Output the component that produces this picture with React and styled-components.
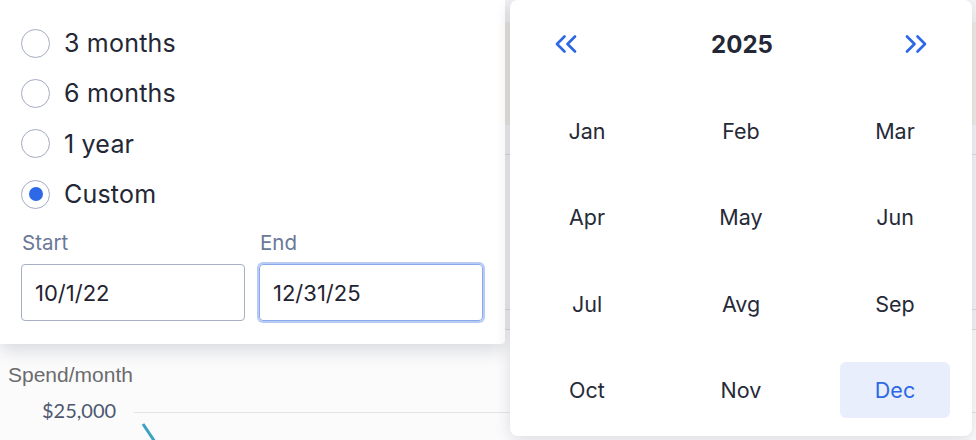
import React from "react";
import styled, { createGlobalStyle } from "styled-components";
import { ChevronsLeft, ChevronsRight } from "lucide-react";

const GlobalStyle = createGlobalStyle`
  html, body {
    margin: 0;
    padding: 0;
    background: #ffffff;
  }
  * {
    box-sizing: border-box;
  }
`;

const Stage = styled.div`
  position: relative;
  width: 976px;
  height: 440px;
  overflow: hidden;
  background: #f4f4f6;
  font-family: "Inter", "Noto Sans", sans-serif;
`;

/* page content sitting behind the popovers */
const Backdrop = styled.div`
  display: flex;
  flex-direction: column;
  height: 100%;
`;

const HeaderBand = styled.div`
  flex-shrink: 0;
  margin-top: 22px;
  height: 103px;
  background: #efebe7;
`;

const TableRow = styled.div`
  flex-shrink: 0;
  height: ${(p) => p.$h}px;
  border-bottom: 1px solid #dcdce0;
`;

const ChartArea = styled.div`
  flex: 1;
  min-height: 0;
  overflow: hidden;
  background: #fbfbfc;
  padding: 32px 0 0 8px;
`;

const ChartTitle = styled.div`
  font-family: "Liberation Sans", Arial, sans-serif;
  font-size: 21px;
  color: #6b6b6e;
  line-height: 26px;
`;

const AxisRow = styled.div`
  display: flex;
  align-items: center;
  margin-top: 10px;
  padding-left: 34px;
  gap: 18px;
`;

const AxisLabel = styled.span`
  font-family: "Lato", sans-serif;
  font-size: 20px;
  line-height: 24px;
  color: #4d5870;
`;

const GridLine = styled.div`
  flex: 1;
  height: 1px;
  background: #e3e4e8;
  margin-top: 4px;
`;

const ChartLine = styled.svg`
  display: block;
  margin: 0 0 0 127px;
`;

/* left popover: range picker */
const RangePanel = styled.div`
  position: absolute;
  left: 0;
  top: 0;
  width: 505px;
  height: 344px;
  background: #ffffff;
  border-radius: 0 0 4px 0;
  box-shadow: 0 6px 18px rgba(30, 35, 55, 0.16);
  padding: 18px 22px 23px 21px;
  display: flex;
  flex-direction: column;
`;

const RadioList = styled.div`
  display: flex;
  flex-direction: column;
`;

const RadioRow = styled.label`
  display: flex;
  align-items: center;
  gap: 14px;
  height: 50.3px;
  font-size: 25px;
  color: #232736;
  letter-spacing: 0.2px;
`;

const RadioCircle = styled.span`
  width: 29px;
  height: 29px;
  border-radius: 50%;
  border: 1px solid #a3abc2;
  background: #ffffff;
  display: flex;
  align-items: center;
  justify-content: center;

  &::after {
    content: "";
    width: 14px;
    height: 14px;
    border-radius: 50%;
    background: ${(p) => (p.$checked ? "#2d68e6" : "transparent")};
  }
`;

const Fields = styled.div`
  display: grid;
  grid-template-columns: 1fr 1fr;
  column-gap: 14px;
  margin-top: 12px;
`;

const Field = styled.div`
  display: flex;
  flex-direction: column;
  gap: 9px;
`;

const FieldLabel = styled.span`
  font-size: 20.5px;
  line-height: 24px;
  color: #6b7898;
  padding-left: 1px;
`;

const DateInput = styled.div`
  height: 57px;
  border-radius: 4px;
  border: 1px solid ${(p) => (p.$focused ? "#8ba8ea" : "#a7afc4")};
  box-shadow: ${(p) => (p.$focused ? "0 0 0 2px #b7cbf5" : "none")};
  display: flex;
  align-items: center;
  padding-left: 13px;
  font-size: 22px;
  color: #1f2332;
`;

/* right popover: month calendar */
const CalendarPanel = styled.div`
  position: absolute;
  left: 510px;
  top: 0;
  width: 462px;
  height: 436px;
  background: #ffffff;
  border-radius: 8px;
  box-shadow: 0 4px 16px rgba(30, 35, 55, 0.14);
  display: flex;
  flex-direction: column;
`;

const CalendarHeader = styled.div`
  height: 88px;
  display: flex;
  align-items: center;
  justify-content: space-between;
  padding: 0 38px 0 38px;
`;

const NavButton = styled.button`
  border: none;
  background: none;
  padding: 0;
  display: flex;
  color: #2d68e6;
  cursor: pointer;
`;

const YearTitle = styled.span`
  font-size: 24px;
  font-weight: 700;
  color: #232736;
  margin-left: 2px;
`;

const MonthGrid = styled.div`
  display: grid;
  grid-template-columns: repeat(3, 1fr);
  grid-template-rows: repeat(4, 86.3px);
  align-items: center;
  justify-items: center;
`;

const MonthCell = styled.div`
  width: 110px;
  height: 56px;
  border-radius: 6px;
  display: flex;
  align-items: center;
  justify-content: center;
  font-size: 21.5px;
  color: ${(p) => (p.$active ? "#2d68e6" : "#262a37")};
  background: ${(p) => (p.$active ? "#e8eefb" : "transparent")};
`;

const ranges = ["3 months", "6 months", "1 year", "Custom"];
const months = [
  "Jan", "Feb", "Mar",
  "Apr", "May", "Jun",
  "Jul", "Avg", "Sep",
  "Oct", "Nov", "Dec",
];

export default function App() {
  return (
    <>
      <GlobalStyle />
      <Stage>
        <Backdrop>
          <HeaderBand />
          <TableRow $h={30} />
          <TableRow $h={155} />
          <TableRow $h={20} />
          <ChartArea>
            <ChartTitle>Spend/month</ChartTitle>
            <AxisRow>
              <AxisLabel>$25,000</AxisLabel>
              <GridLine />
            </AxisRow>
            <ChartLine width="30" height="24" viewBox="0 0 30 24">
              <path d="M8 2 L20 20" stroke="#3aa3c0" strokeWidth="3" fill="none" />
            </ChartLine>
          </ChartArea>
        </Backdrop>

        <RangePanel>
          <RadioList>
            {ranges.map((r) => (
              <RadioRow key={r}>
                <RadioCircle $checked={r === "Custom"} />
                {r}
              </RadioRow>
            ))}
          </RadioList>
          <Fields>
            <Field>
              <FieldLabel>Start</FieldLabel>
              <DateInput>10/1/22</DateInput>
            </Field>
            <Field>
              <FieldLabel>End</FieldLabel>
              <DateInput $focused>12/31/25</DateInput>
            </Field>
          </Fields>
        </RangePanel>

        <CalendarPanel>
          <CalendarHeader>
            <NavButton aria-label="Previous year">
              <ChevronsLeft size={36} strokeWidth={1.8} />
            </NavButton>
            <YearTitle>2025</YearTitle>
            <NavButton aria-label="Next year">
              <ChevronsRight size={36} strokeWidth={1.8} />
            </NavButton>
          </CalendarHeader>
          <MonthGrid>
            {months.map((m) => (
              <MonthCell key={m} $active={m === "Dec"}>
                {m}
              </MonthCell>
            ))}
          </MonthGrid>
        </CalendarPanel>
      </Stage>
    </>
  );
}
